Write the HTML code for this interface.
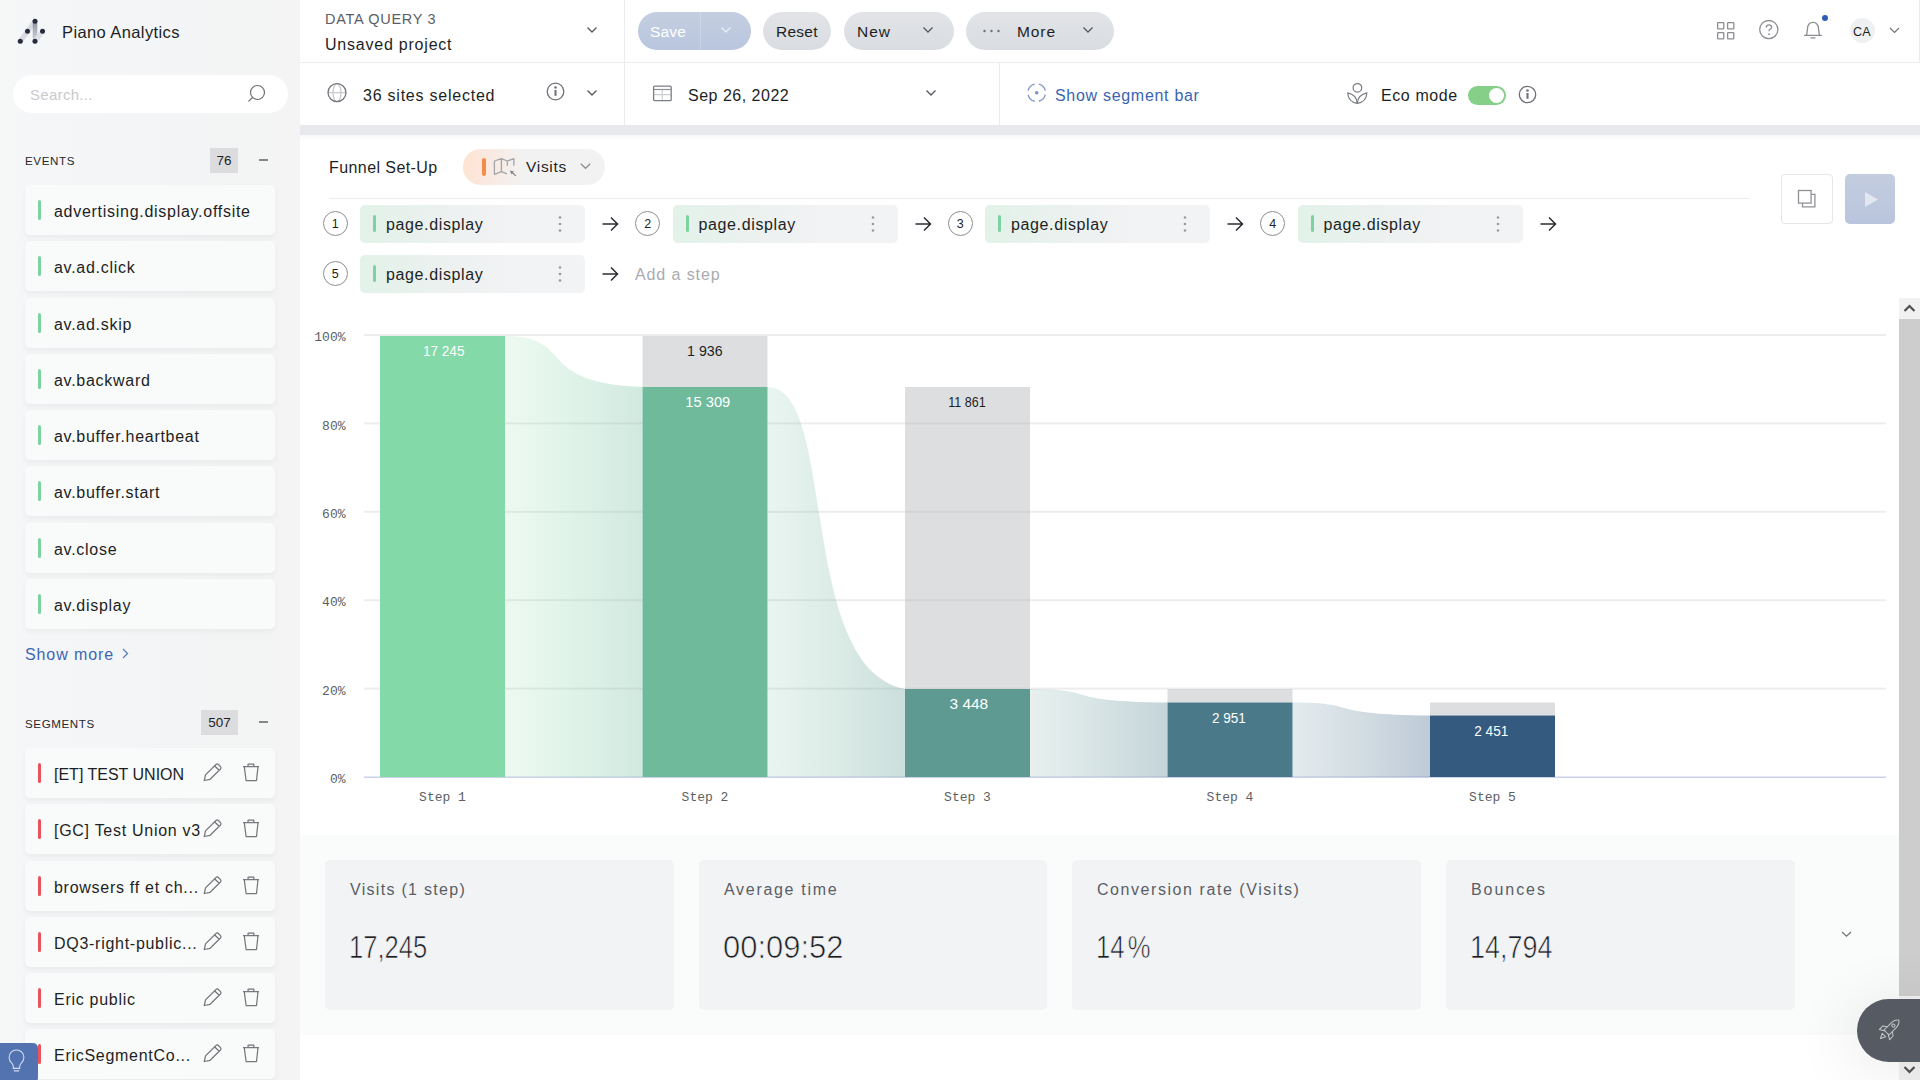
<!DOCTYPE html>
<html><head><meta charset="utf-8">
<style>
*{box-sizing:border-box;margin:0;padding:0}
html,body{width:1920px;height:1080px;overflow:hidden;background:#fff;font-family:"Liberation Sans",sans-serif;color:#1d1f24}
.abs{position:absolute}
#side{position:absolute;left:0;top:0;width:300px;height:1080px;background:linear-gradient(90deg,#f6f7f7 0%,#f5f6f8 12%,#f4f5f7 50%,#f3f4f4 75%,#f3f4f3 100%)}
.t{position:absolute;white-space:nowrap;line-height:1}
.item{position:absolute;left:25px;width:250px;height:50px;background:#f9fafa;border-radius:5px;box-shadow:0 3px 6px rgba(0,0,0,0.045)}
.item .bar{position:absolute;left:13px;top:15px;width:3px;height:20px;border-radius:2px;background:#7dd3a0}
.item .bar.r{background:#e8535d}
.item .lbl{position:absolute;left:29px;top:19px;font-size:16px;letter-spacing:0.72px;line-height:1;white-space:nowrap}
.sech{position:absolute;left:25px;font-size:11.6px;letter-spacing:0.6px;line-height:1;color:#25272b}
.badge{position:absolute;background:#dcdcdf;font-size:13.5px;text-align:center;line-height:25px;height:25px}
.val{font-size:32px;color:#1d1f24;-webkit-text-stroke:0.7px #f2f3f5;transform-origin:0 0}
.minus{position:absolute;left:259px;width:9px;height:1.6px;background:#85878d}
</style></head><body>
<div id="side">
  <svg class="abs" style="left:14px;top:15px" width="36" height="34" viewBox="14 15 36 34">
    <defs><linearGradient id="lg1" gradientUnits="userSpaceOnUse" x1="35" y1="41" x2="35" y2="21"><stop offset="0" stop-color="#d3d5db"/><stop offset="0.6" stop-color="#a9adb8"/><stop offset="1" stop-color="#8a8f9c"/></linearGradient></defs>
    <path d="M20.3 41.3 L35 21.3" stroke="#d9dbe1" stroke-width="5" stroke-linecap="round"/>
    <path d="M35 23 L35 41.3" stroke="url(#lg1)" stroke-width="4.6"/>
    <path d="M35 41.3 L42.5 31.3" stroke="#dfe1e6" stroke-width="5" stroke-linecap="round"/>
    <g fill="#272d3f"><circle cx="35" cy="21.3" r="2.5"/><circle cx="27.5" cy="31.3" r="2.5"/><circle cx="42.5" cy="31.3" r="2.5"/><circle cx="20.3" cy="41.3" r="2.5"/><circle cx="35" cy="41.3" r="2.5"/></g>
  </svg>
  <div class="t" style="left:62px;top:24px;font-size:16.5px;letter-spacing:0.4px;color:#1d1f24">Piano Analytics</div>
  <div class="abs" style="left:13px;top:75px;width:275px;height:38px;border-radius:19px;background:#fff"></div>
  <div class="t" style="left:30px;top:87px;font-size:15px;letter-spacing:0.3px;color:#c9cacc">Search...</div>
  <svg class="abs" style="left:246px;top:83px" width="22" height="22" viewBox="0 0 22 22"><circle cx="11.5" cy="9.5" r="7" fill="none" stroke="#6d6f74" stroke-width="1.2"/><path d="M6.5 14.5 L2.8 18.2" stroke="#6d6f74" stroke-width="1.2" stroke-linecap="round"/></svg>

  <div class="sech" style="top:155px">EVENTS</div>
  <div class="badge" style="left:210px;top:148px;width:28px">76</div>
  <div class="minus" style="top:159px"></div>

  <div class="item" style="top:185px"><div class="bar"></div><div class="lbl">advertising.display.offsite</div></div>
  <div class="item" style="top:241.25px"><div class="bar"></div><div class="lbl">av.ad.click</div></div>
  <div class="item" style="top:297.5px"><div class="bar"></div><div class="lbl">av.ad.skip</div></div>
  <div class="item" style="top:353.75px"><div class="bar"></div><div class="lbl">av.backward</div></div>
  <div class="item" style="top:410px"><div class="bar"></div><div class="lbl">av.buffer.heartbeat</div></div>
  <div class="item" style="top:466.25px"><div class="bar"></div><div class="lbl">av.buffer.start</div></div>
  <div class="item" style="top:522.5px"><div class="bar"></div><div class="lbl">av.close</div></div>
  <div class="item" style="top:578.75px"><div class="bar"></div><div class="lbl">av.display</div></div>

  <div class="t" style="left:25px;top:647px;font-size:16px;letter-spacing:0.9px;color:#3d66b3">Show more</div>
  <svg class="abs" style="left:120px;top:647px" width="10" height="13" viewBox="0 0 10 13"><path d="M3 2 L7.5 6.5 L3 11" fill="none" stroke="#5b7cbf" stroke-width="1.3"/></svg>

  <div class="sech" style="top:718px">SEGMENTS</div>
  <div class="badge" style="left:201px;top:710px;width:37px">507</div>
  <div class="minus" style="top:721px"></div>
  <div class="item" style="top:748px"><div class="bar r"></div><div class="lbl" style="letter-spacing:0">[ET] TEST UNION</div><svg class="abs" style="left:178px;top:14px" width="20" height="20" viewBox="0 0 20 20"><path d="M1.3 18.5 L2.5 12.9 L13 2.5 Q14.2 1.4 15.4 2.5 L17.5 4.6 Q18.6 5.8 17.5 7 L7.1 17.3 Z M12 4.2 L16.2 8.3" fill="none" stroke="#75777d" stroke-width="1.25" stroke-linejoin="round"/></svg><svg class="abs" style="left:217px;top:14px" width="18" height="20" viewBox="0 0 18 20"><path d="M1 4.5 H17 M6.1 4.3 V2.2 H11.8 V4.3 M2.3 4.8 L4.1 18.5 H14.5 L16 4.8" fill="none" stroke="#75777d" stroke-width="1.25" stroke-linejoin="round"/></svg></div>
  <div class="item" style="top:804.25px"><div class="bar r"></div><div class="lbl">[GC] Test Union v3</div><svg class="abs" style="left:178px;top:14px" width="20" height="20" viewBox="0 0 20 20"><path d="M1.3 18.5 L2.5 12.9 L13 2.5 Q14.2 1.4 15.4 2.5 L17.5 4.6 Q18.6 5.8 17.5 7 L7.1 17.3 Z M12 4.2 L16.2 8.3" fill="none" stroke="#75777d" stroke-width="1.25" stroke-linejoin="round"/></svg><svg class="abs" style="left:217px;top:14px" width="18" height="20" viewBox="0 0 18 20"><path d="M1 4.5 H17 M6.1 4.3 V2.2 H11.8 V4.3 M2.3 4.8 L4.1 18.5 H14.5 L16 4.8" fill="none" stroke="#75777d" stroke-width="1.25" stroke-linejoin="round"/></svg></div>
  <div class="item" style="top:860.5px"><div class="bar r"></div><div class="lbl">browsers ff et ch...</div><svg class="abs" style="left:178px;top:14px" width="20" height="20" viewBox="0 0 20 20"><path d="M1.3 18.5 L2.5 12.9 L13 2.5 Q14.2 1.4 15.4 2.5 L17.5 4.6 Q18.6 5.8 17.5 7 L7.1 17.3 Z M12 4.2 L16.2 8.3" fill="none" stroke="#75777d" stroke-width="1.25" stroke-linejoin="round"/></svg><svg class="abs" style="left:217px;top:14px" width="18" height="20" viewBox="0 0 18 20"><path d="M1 4.5 H17 M6.1 4.3 V2.2 H11.8 V4.3 M2.3 4.8 L4.1 18.5 H14.5 L16 4.8" fill="none" stroke="#75777d" stroke-width="1.25" stroke-linejoin="round"/></svg></div>
  <div class="item" style="top:916.75px"><div class="bar r"></div><div class="lbl">DQ3-right-public...</div><svg class="abs" style="left:178px;top:14px" width="20" height="20" viewBox="0 0 20 20"><path d="M1.3 18.5 L2.5 12.9 L13 2.5 Q14.2 1.4 15.4 2.5 L17.5 4.6 Q18.6 5.8 17.5 7 L7.1 17.3 Z M12 4.2 L16.2 8.3" fill="none" stroke="#75777d" stroke-width="1.25" stroke-linejoin="round"/></svg><svg class="abs" style="left:217px;top:14px" width="18" height="20" viewBox="0 0 18 20"><path d="M1 4.5 H17 M6.1 4.3 V2.2 H11.8 V4.3 M2.3 4.8 L4.1 18.5 H14.5 L16 4.8" fill="none" stroke="#75777d" stroke-width="1.25" stroke-linejoin="round"/></svg></div>
  <div class="item" style="top:973px"><div class="bar r"></div><div class="lbl">Eric public</div><svg class="abs" style="left:178px;top:14px" width="20" height="20" viewBox="0 0 20 20"><path d="M1.3 18.5 L2.5 12.9 L13 2.5 Q14.2 1.4 15.4 2.5 L17.5 4.6 Q18.6 5.8 17.5 7 L7.1 17.3 Z M12 4.2 L16.2 8.3" fill="none" stroke="#75777d" stroke-width="1.25" stroke-linejoin="round"/></svg><svg class="abs" style="left:217px;top:14px" width="18" height="20" viewBox="0 0 18 20"><path d="M1 4.5 H17 M6.1 4.3 V2.2 H11.8 V4.3 M2.3 4.8 L4.1 18.5 H14.5 L16 4.8" fill="none" stroke="#75777d" stroke-width="1.25" stroke-linejoin="round"/></svg></div>
  <div class="item" style="top:1029.25px"><div class="bar r"></div><div class="lbl">EricSegmentCo...</div><svg class="abs" style="left:178px;top:14px" width="20" height="20" viewBox="0 0 20 20"><path d="M1.3 18.5 L2.5 12.9 L13 2.5 Q14.2 1.4 15.4 2.5 L17.5 4.6 Q18.6 5.8 17.5 7 L7.1 17.3 Z M12 4.2 L16.2 8.3" fill="none" stroke="#75777d" stroke-width="1.25" stroke-linejoin="round"/></svg><svg class="abs" style="left:217px;top:14px" width="18" height="20" viewBox="0 0 18 20"><path d="M1 4.5 H17 M6.1 4.3 V2.2 H11.8 V4.3 M2.3 4.8 L4.1 18.5 H14.5 L16 4.8" fill="none" stroke="#75777d" stroke-width="1.25" stroke-linejoin="round"/></svg></div>
</div>

<!-- header row 1 -->
<div class="abs" style="left:300px;top:62px;width:1620px;height:1px;background:#ececee"></div>
<div class="abs" style="left:624px;top:0;width:1px;height:62px;background:#ececee"></div>
<div class="abs" style="left:1919px;top:0;width:1px;height:62px;background:#ececee"></div>
<div class="t" style="left:325px;top:12px;font-size:14.5px;letter-spacing:0.7px;color:#5b5e65">DATA QUERY 3</div>
<div class="t" style="left:325px;top:37px;font-size:16px;letter-spacing:0.78px;color:#1d1f24">Unsaved project</div>
<svg class="abs" style="left:586px;top:26px" width="12" height="8" viewBox="0 0 12 8"><path d="M1.5 1.5 L6 6 L10.5 1.5" fill="none" stroke="#55585e" stroke-width="1.3"/></svg>

<div class="abs" style="left:638px;top:12px;width:113px;height:38px;border-radius:19px;background:linear-gradient(180deg,#c4cee0,#b9c6de)"></div>
<div class="abs" style="left:700px;top:12px;width:1px;height:38px;background:rgba(255,255,255,0.22)"></div>
<div class="t" style="left:650px;top:24px;font-size:15.5px;letter-spacing:0.2px;color:#fff">Save</div>
<svg class="abs" style="left:720px;top:26px" width="12" height="8" viewBox="0 0 12 8"><path d="M1.5 1.5 L6 6 L10.5 1.5" fill="none" stroke="#eef1f7" stroke-width="1.2"/></svg>

<div class="abs" style="left:763px;top:12px;width:68px;height:38px;border-radius:19px;background:linear-gradient(180deg,#e2e4e7,#d9dce1)"></div>
<div class="t" style="left:776px;top:24px;font-size:15.5px;letter-spacing:0.25px">Reset</div>

<div class="abs" style="left:844px;top:12px;width:110px;height:38px;border-radius:19px;background:linear-gradient(180deg,#e2e4e7,#d9dce1)"></div>
<div class="t" style="left:857px;top:24px;font-size:15.5px;letter-spacing:1px">New</div>
<svg class="abs" style="left:922px;top:26px" width="12" height="8" viewBox="0 0 12 8"><path d="M1.5 1.5 L6 6 L10.5 1.5" fill="none" stroke="#55585e" stroke-width="1.3"/></svg>

<div class="abs" style="left:966px;top:12px;width:148px;height:38px;border-radius:19px;background:linear-gradient(180deg,#e2e4e7,#d9dce1)"></div>
<svg class="abs" style="left:982px;top:28px" width="20" height="6" viewBox="0 0 20 6"><g fill="#6c6f75"><circle cx="2.5" cy="3" r="1.2"/><circle cx="9.5" cy="3" r="1.2"/><circle cx="16.5" cy="3" r="1.2"/></g></svg>
<div class="t" style="left:1017px;top:24px;font-size:15.5px;letter-spacing:0.9px">More</div>
<svg class="abs" style="left:1082px;top:26px" width="12" height="8" viewBox="0 0 12 8"><path d="M1.5 1.5 L6 6 L10.5 1.5" fill="none" stroke="#55585e" stroke-width="1.3"/></svg>

<svg class="abs" style="left:1714px;top:19px" width="24" height="24" viewBox="0 0 24 24"><g fill="none" stroke="#8b8d92" stroke-width="1.3"><rect x="3.6" y="3.6" width="6.2" height="6.2" rx="0.6"/><rect x="13.6" y="3.6" width="6.2" height="6.2" rx="0.6"/><rect x="3.6" y="13.6" width="6.2" height="6.2" rx="0.6"/><rect x="13.6" y="13.6" width="6.2" height="6.2" rx="0.6"/></g></svg>
<svg class="abs" style="left:1757px;top:18px" width="24" height="24" viewBox="0 0 24 24"><circle cx="11.8" cy="11.6" r="9.1" fill="none" stroke="#8b8d92" stroke-width="1.3"/><path d="M9.3 9.4 Q9.3 6.8 12 6.8 Q14.6 6.8 14.6 9.2 Q14.6 10.8 12.6 11.6 Q12 11.9 12 13.2" fill="none" stroke="#8b8d92" stroke-width="1.3"/><circle cx="12" cy="16.2" r="0.9" fill="#8b8d92"/></svg>
<svg class="abs" style="left:1800px;top:18px" width="26" height="24" viewBox="0 0 26 24"><path d="M4.6 17.4 H21.4 M6.6 17.2 Q7.2 14.2 7.5 10.4 Q8 4.3 13 4.3 Q18 4.3 18.5 10.4 Q18.8 14.2 19.4 17.2 M11 19.9 H15" fill="none" stroke="#8b8d92" stroke-width="1.3" stroke-linecap="round"/></svg>
<div class="abs" style="left:1822px;top:15px;width:6px;height:6px;border-radius:50%;background:#2e5cb8"></div>
<div class="abs" style="left:1850px;top:18px;width:25px;height:25px;border-radius:50%;background:#eff0f2"></div>
<div class="t" style="left:1853px;top:26px;font-size:12.5px;letter-spacing:0.2px;color:#1d1f24">CA</div>
<svg class="abs" style="left:1888px;top:26px" width="13" height="9" viewBox="0 0 13 9"><path d="M2 2 L6.5 6.4 L11 2" fill="none" stroke="#6f7177" stroke-width="1.2"/></svg>

<!-- header row 2 -->
<div class="abs" style="left:624px;top:63px;width:1px;height:62px;background:#ececee"></div>
<div class="abs" style="left:999px;top:63px;width:1px;height:62px;background:#ececee"></div>
<svg class="abs" style="left:325px;top:81px" width="24" height="24" viewBox="0 0 24 24"><ellipse cx="12" cy="11.6" rx="4" ry="9" fill="none" stroke="#c2c4c8" stroke-width="1.2"/><path d="M3 11.6 H21" stroke="#c8cacd" stroke-width="1.3"/><circle cx="12" cy="11.6" r="9" fill="none" stroke="#72757b" stroke-width="1.3"/></svg>
<div class="t" style="left:363px;top:88px;font-size:16px;letter-spacing:0.77px">36 sites selected</div>
<svg class="abs" style="left:544px;top:80px" width="22" height="22" viewBox="0 0 22 22"><circle cx="11.5" cy="11.5" r="8.3" fill="none" stroke="#6f7177" stroke-width="1.3"/><circle cx="11.5" cy="7.5" r="1.3" fill="#6f7177"/><path d="M11.5 10 V15.8" stroke="#6f7177" stroke-width="2.1"/></svg>
<svg class="abs" style="left:586px;top:89px" width="12" height="8" viewBox="0 0 12 8"><path d="M1.5 1.5 L6 6 L10.5 1.5" fill="none" stroke="#55585e" stroke-width="1.3"/></svg>

<svg class="abs" style="left:650px;top:82px" width="24" height="22" viewBox="0 0 24 22"><path d="M3.6 12.7 H21 M12.3 7.6 V18.6" stroke="#cdd0d3" stroke-width="1.2"/><path d="M3.6 7.5 H21" stroke="#8e9196" stroke-width="1.2"/><rect x="3.6" y="4.1" width="17.6" height="14.6" rx="1.2" fill="none" stroke="#7b7e84" stroke-width="1.3"/></svg>
<div class="t" style="left:688px;top:88px;font-size:16px;letter-spacing:0.5px">Sep 26, 2022</div>
<svg class="abs" style="left:925px;top:89px" width="12" height="8" viewBox="0 0 12 8"><path d="M1.5 1.5 L6 6 L10.5 1.5" fill="none" stroke="#55585e" stroke-width="1.3"/></svg>

<svg class="abs" style="left:1025px;top:81px" width="24" height="24" viewBox="0 0 24 24"><circle cx="11.7" cy="11.7" r="8.8" fill="none" stroke="#7f97c6" stroke-width="1.4" stroke-dasharray="9.5 4.3" stroke-dashoffset="-2"/><circle cx="11.7" cy="11.7" r="1.8" fill="#7b93c4"/></svg>
<div class="t" style="left:1055px;top:88px;font-size:16px;letter-spacing:0.7px;color:#3a64b0">Show segment bar</div>

<svg class="abs" style="left:1345px;top:81px" width="24" height="24" viewBox="0 0 24 24"><g fill="none" stroke="#7a7d83" stroke-width="1.25" stroke-linejoin="round"><circle cx="12.4" cy="6.8" r="4.3"/><path d="M12.3 22.3 Q3.2 21.2 2.7 11.8 Q11.6 13.6 12.3 22.3 Z"/><path d="M12.3 22.3 Q21.4 21.2 21.9 11.8 Q13 13.6 12.3 22.3 Z"/></g></svg>
<div class="t" style="left:1381px;top:88px;font-size:16px;letter-spacing:0.6px">Eco mode</div>
<div class="abs" style="left:1468px;top:86px;width:38px;height:19px;border-radius:10px;background:#86cf88"></div>
<div class="abs" style="left:1488.5px;top:88px;width:15px;height:15px;border-radius:50%;background:#fff"></div>
<svg class="abs" style="left:1517px;top:84px" width="22" height="22" viewBox="0 0 22 22"><circle cx="10.5" cy="10.5" r="8.2" fill="none" stroke="#6f7177" stroke-width="1.3"/><circle cx="10.5" cy="6.5" r="1.3" fill="#6f7177"/><path d="M10.5 9 V14.8" stroke="#6f7177" stroke-width="2.1"/></svg>

<!-- gray band -->
<div class="abs" style="left:300px;top:125px;width:1620px;height:10px;background:#e8e9ec"></div>
<div class="abs" style="left:300px;top:135px;width:1620px;height:6px;background:linear-gradient(180deg,#f7f8f9,#fff)"></div>

<div class="t" style="left:329px;top:160px;font-size:16px;letter-spacing:0.42px">Funnel Set-Up</div>
<div class="abs" style="left:463px;top:148.5px;width:142px;height:36px;border-radius:18px;background:linear-gradient(90deg,#fee3d2 0%,#f8ebe4 22%,#f2f2f2 42%,#f2f2f2 100%)"></div>
<div class="abs" style="left:482px;top:158px;width:4px;height:17.5px;border-radius:2px;background:#f58a4b"></div>
<svg class="abs" style="left:492px;top:156px" width="26" height="22" viewBox="0 0 26 22"><path d="M2.4 5 L9.4 2.7 L15.3 5 L21.9 2.7 V9.7 M15.3 5 V9.7 M9.4 2.7 V15.6 M2.4 5 V18.3 L9.4 15.6 L14.9 17.9" fill="none" stroke="#a3a5a9" stroke-width="1.3" stroke-linejoin="round"/><path d="M19.5 16 L23.9 19.9" stroke="#808287" stroke-width="1.2"/><path d="M18 14.4 L22 15.6 L19.2 18.3 Z" fill="#808287"/></svg>
<div class="t" style="left:526px;top:159px;font-size:15.5px;letter-spacing:0.7px">Visits</div>
<svg class="abs" style="left:579px;top:162px" width="13" height="9" viewBox="0 0 13 9"><path d="M1.8 1.8 L6.5 6.3 L11.2 1.8" fill="none" stroke="#8b8d92" stroke-width="1.2"/></svg>
<div class="abs" style="left:329px;top:198px;width:1421px;height:1px;background:#ececee"></div>

<div class="abs" style="left:1781px;top:174px;width:52px;height:50px;border-radius:4px;border:1px solid #e5e6e8;background:#fff"></div>
<svg class="abs" style="left:1795px;top:187px" width="24" height="24" viewBox="0 0 24 24"><path d="M7.5 16.3 V19.8 H19.9 V7.4 H16.3" fill="none" stroke="#8f9195" stroke-width="1.3"/><rect x="3.5" y="3.5" width="12.6" height="12.6" fill="none" stroke="#8f9195" stroke-width="1.3"/></svg>
<div class="abs" style="left:1845px;top:174px;width:50px;height:50px;border-radius:5px;background:linear-gradient(180deg,#c4cde0,#b9c5dd)"></div>
<svg class="abs" style="left:1860px;top:188px" width="22" height="22" viewBox="0 0 22 22"><path d="M5 4 L18 11.5 L5 19 Z" fill="#e3e7f0"/></svg>
<div class="abs" style="left:322.8px;top:211.0px;width:25px;height:25px;border-radius:50%;border:1px solid #8d8f94;background:#fff"></div>
<div class="t" style="left:322.8px;top:217.5px;width:25px;text-align:center;font-size:12.5px">1</div>
<div class="abs" style="left:360px;top:205px;width:225px;height:37.5px;border-radius:5px;background:linear-gradient(90deg,#e2f2e9 0%,#eef1f1 45%,#f2f3f4 70%)"></div>
<div class="abs" style="left:373px;top:215.0px;width:3px;height:17px;border-radius:1.5px;background:#7dd3a0"></div>
<div class="t" style="left:386px;top:217px;font-size:16px;letter-spacing:0.63px">page.display</div>
<svg class="abs" style="left:556px;top:214.5px" width="8" height="18" viewBox="0 0 8 18"><g fill="#9a9ca1"><circle cx="4" cy="2.5" r="1.3"/><circle cx="4" cy="9" r="1.3"/><circle cx="4" cy="15.5" r="1.3"/></g></svg>
<svg class="abs" style="left:600px;top:214.5px" width="20" height="18" viewBox="0 0 20 18"><path d="M2.5 9 H17.5 M11 2.5 L17.5 9 L11 15.5" fill="none" stroke="#2a2d33" stroke-width="1.5"/></svg>
<div class="abs" style="left:635.3px;top:211.0px;width:25px;height:25px;border-radius:50%;border:1px solid #8d8f94;background:#fff"></div>
<div class="t" style="left:635.3px;top:217.5px;width:25px;text-align:center;font-size:12.5px">2</div>
<div class="abs" style="left:672.5px;top:205px;width:225px;height:37.5px;border-radius:5px;background:linear-gradient(90deg,#e2f2e9 0%,#eef1f1 45%,#f2f3f4 70%)"></div>
<div class="abs" style="left:685.5px;top:215.0px;width:3px;height:17px;border-radius:1.5px;background:#7dd3a0"></div>
<div class="t" style="left:698.5px;top:217px;font-size:16px;letter-spacing:0.63px">page.display</div>
<svg class="abs" style="left:868.5px;top:214.5px" width="8" height="18" viewBox="0 0 8 18"><g fill="#9a9ca1"><circle cx="4" cy="2.5" r="1.3"/><circle cx="4" cy="9" r="1.3"/><circle cx="4" cy="15.5" r="1.3"/></g></svg>
<svg class="abs" style="left:912.5px;top:214.5px" width="20" height="18" viewBox="0 0 20 18"><path d="M2.5 9 H17.5 M11 2.5 L17.5 9 L11 15.5" fill="none" stroke="#2a2d33" stroke-width="1.5"/></svg>
<div class="abs" style="left:947.8px;top:211.0px;width:25px;height:25px;border-radius:50%;border:1px solid #8d8f94;background:#fff"></div>
<div class="t" style="left:947.8px;top:217.5px;width:25px;text-align:center;font-size:12.5px">3</div>
<div class="abs" style="left:985px;top:205px;width:225px;height:37.5px;border-radius:5px;background:linear-gradient(90deg,#e2f2e9 0%,#eef1f1 45%,#f2f3f4 70%)"></div>
<div class="abs" style="left:998px;top:215.0px;width:3px;height:17px;border-radius:1.5px;background:#7dd3a0"></div>
<div class="t" style="left:1011px;top:217px;font-size:16px;letter-spacing:0.63px">page.display</div>
<svg class="abs" style="left:1181px;top:214.5px" width="8" height="18" viewBox="0 0 8 18"><g fill="#9a9ca1"><circle cx="4" cy="2.5" r="1.3"/><circle cx="4" cy="9" r="1.3"/><circle cx="4" cy="15.5" r="1.3"/></g></svg>
<svg class="abs" style="left:1225px;top:214.5px" width="20" height="18" viewBox="0 0 20 18"><path d="M2.5 9 H17.5 M11 2.5 L17.5 9 L11 15.5" fill="none" stroke="#2a2d33" stroke-width="1.5"/></svg>
<div class="abs" style="left:1260.3px;top:211.0px;width:25px;height:25px;border-radius:50%;border:1px solid #8d8f94;background:#fff"></div>
<div class="t" style="left:1260.3px;top:217.5px;width:25px;text-align:center;font-size:12.5px">4</div>
<div class="abs" style="left:1297.5px;top:205px;width:225px;height:37.5px;border-radius:5px;background:linear-gradient(90deg,#e2f2e9 0%,#eef1f1 45%,#f2f3f4 70%)"></div>
<div class="abs" style="left:1310.5px;top:215.0px;width:3px;height:17px;border-radius:1.5px;background:#7dd3a0"></div>
<div class="t" style="left:1323.5px;top:217px;font-size:16px;letter-spacing:0.63px">page.display</div>
<svg class="abs" style="left:1493.5px;top:214.5px" width="8" height="18" viewBox="0 0 8 18"><g fill="#9a9ca1"><circle cx="4" cy="2.5" r="1.3"/><circle cx="4" cy="9" r="1.3"/><circle cx="4" cy="15.5" r="1.3"/></g></svg>
<svg class="abs" style="left:1537.5px;top:214.5px" width="20" height="18" viewBox="0 0 20 18"><path d="M2.5 9 H17.5 M11 2.5 L17.5 9 L11 15.5" fill="none" stroke="#2a2d33" stroke-width="1.5"/></svg>
<div class="abs" style="left:322.8px;top:261.0px;width:25px;height:25px;border-radius:50%;border:1px solid #8d8f94;background:#fff"></div>
<div class="t" style="left:322.8px;top:267.5px;width:25px;text-align:center;font-size:12.5px">5</div>
<div class="abs" style="left:360px;top:255px;width:225px;height:37.5px;border-radius:5px;background:linear-gradient(90deg,#e2f2e9 0%,#eef1f1 45%,#f2f3f4 70%)"></div>
<div class="abs" style="left:373px;top:265.0px;width:3px;height:17px;border-radius:1.5px;background:#7dd3a0"></div>
<div class="t" style="left:386px;top:267px;font-size:16px;letter-spacing:0.63px">page.display</div>
<svg class="abs" style="left:556px;top:264.5px" width="8" height="18" viewBox="0 0 8 18"><g fill="#9a9ca1"><circle cx="4" cy="2.5" r="1.3"/><circle cx="4" cy="9" r="1.3"/><circle cx="4" cy="15.5" r="1.3"/></g></svg>
<svg class="abs" style="left:600px;top:264.5px" width="20" height="18" viewBox="0 0 20 18"><path d="M2.5 9 H17.5 M11 2.5 L17.5 9 L11 15.5" fill="none" stroke="#2a2d33" stroke-width="1.5"/></svg>
<div class="t" style="left:635px;top:267px;font-size:16px;letter-spacing:0.9px;color:#a9abb0">Add a step</div>
<svg class="abs" style="left:0;top:0" width="1920" height="840" viewBox="0 0 1920 840">
<defs>
<linearGradient id="fl0" x1="0" y1="0" x2="1" y2="0"><stop offset="0" stop-color="#83d9a7" stop-opacity="0.15"/><stop offset="1" stop-color="#6fba9b" stop-opacity="0.32"/></linearGradient>
<linearGradient id="fl1" x1="0" y1="0" x2="1" y2="0"><stop offset="0" stop-color="#6fba9b" stop-opacity="0.15"/><stop offset="1" stop-color="#5e9a91" stop-opacity="0.32"/></linearGradient>
<linearGradient id="fl2" x1="0" y1="0" x2="1" y2="0"><stop offset="0" stop-color="#5e9a91" stop-opacity="0.15"/><stop offset="1" stop-color="#4a7a89" stop-opacity="0.32"/></linearGradient>
<linearGradient id="fl3" x1="0" y1="0" x2="1" y2="0"><stop offset="0" stop-color="#4a7a89" stop-opacity="0.15"/><stop offset="1" stop-color="#345a80" stop-opacity="0.32"/></linearGradient>
</defs>
<rect x="364" y="334" width="1522" height="2" fill="#ededed"/>
<rect x="364" y="422.4" width="1522" height="2" fill="#ededed"/>
<rect x="364" y="510.8" width="1522" height="2" fill="#ededed"/>
<rect x="364" y="599.2" width="1522" height="2" fill="#ededed"/>
<rect x="364" y="687.6" width="1522" height="2" fill="#ededed"/>
<rect x="364" y="776.5" width="1522" height="1.5" fill="#ccd2ea"/>
<text x="345.5" y="341.2" text-anchor="end" font-family="Liberation Mono" font-size="13" fill="#5d5f63">100%</text>
<text x="345.5" y="429.59999999999997" text-anchor="end" font-family="Liberation Mono" font-size="13" fill="#5d5f63">80%</text>
<text x="345.5" y="518.0" text-anchor="end" font-family="Liberation Mono" font-size="13" fill="#5d5f63">60%</text>
<text x="345.5" y="606.4000000000001" text-anchor="end" font-family="Liberation Mono" font-size="13" fill="#5d5f63">40%</text>
<text x="345.5" y="694.8000000000001" text-anchor="end" font-family="Liberation Mono" font-size="13" fill="#5d5f63">20%</text>
<text x="345.5" y="783.2" text-anchor="end" font-family="Liberation Mono" font-size="13" fill="#5d5f63">0%</text>
<path d="M505 336 C575.8 336.0 533.2 383.4 642.5 387 L642.5 777 L505 777 Z" fill="url(#fl0)"/>
<path d="M767.5 387 C838.3 387.0 795.7 667.9 905 689 L905 777 L767.5 777 Z" fill="url(#fl1)"/>
<path d="M1030 689 C1100.8 689.0 1058.2 701.6 1167.5 702.5 L1167.5 777 L1030 777 Z" fill="url(#fl2)"/>
<path d="M1292.5 702.5 C1363.3 702.5 1320.7 714.6 1430 715.5 L1430 777 L1292.5 777 Z" fill="url(#fl3)"/>
<rect x="380" y="336" width="125" height="441" fill="#83d9a7"/>
<text x="442.5" y="801" text-anchor="middle" font-family="Liberation Mono" font-size="13" fill="#5d5f63">Step 1</text>
<rect x="642.5" y="336" width="125" height="51" fill="#b4b6bb" fill-opacity="0.45"/>
<rect x="642.5" y="387" width="125" height="390" fill="#6fba9b"/>
<text x="705.0" y="801" text-anchor="middle" font-family="Liberation Mono" font-size="13" fill="#5d5f63">Step 2</text>
<rect x="905" y="387" width="125" height="302" fill="#b4b6bb" fill-opacity="0.45"/>
<rect x="905" y="689" width="125" height="88" fill="#5e9a91"/>
<text x="967.5" y="801" text-anchor="middle" font-family="Liberation Mono" font-size="13" fill="#5d5f63">Step 3</text>
<rect x="1167.5" y="689" width="125" height="13.5" fill="#b4b6bb" fill-opacity="0.45"/>
<rect x="1167.5" y="702.5" width="125" height="74.5" fill="#4a7a89"/>
<text x="1230.0" y="801" text-anchor="middle" font-family="Liberation Mono" font-size="13" fill="#5d5f63">Step 4</text>
<rect x="1430" y="702.5" width="125" height="13.0" fill="#b4b6bb" fill-opacity="0.45"/>
<rect x="1430" y="715.5" width="125" height="61.5" fill="#345a80"/>
<text x="1492.5" y="801" text-anchor="middle" font-family="Liberation Mono" font-size="13" fill="#5d5f63">Step 5</text>
<text x="422.9" y="356" font-family="Liberation Sans" font-size="14.5" fill="#fff" textLength="41.6" lengthAdjust="spacingAndGlyphs">17 245</text>
<text x="687.1" y="356" font-family="Liberation Sans" font-size="14.5" fill="#1d1f24" textLength="35.6" lengthAdjust="spacingAndGlyphs">1 936</text>
<text x="685.3" y="407" font-family="Liberation Sans" font-size="14.5" fill="#fff" textLength="45.0" lengthAdjust="spacingAndGlyphs">15 309</text>
<text x="948.3" y="407" font-family="Liberation Sans" font-size="14.5" fill="#1d1f24" textLength="37.4" lengthAdjust="spacingAndGlyphs">11 861</text>
<text x="949.5" y="709" font-family="Liberation Sans" font-size="14.5" fill="#fff" textLength="38.7" lengthAdjust="spacingAndGlyphs">3 448</text>
<text x="1211.9" y="723" font-family="Liberation Sans" font-size="14.5" fill="#fff" textLength="33.9" lengthAdjust="spacingAndGlyphs">2 951</text>
<text x="1474.2" y="736" font-family="Liberation Sans" font-size="14.5" fill="#fff" textLength="34.1" lengthAdjust="spacingAndGlyphs">2 451</text>
</svg>

<div class="abs" style="left:300px;top:835px;width:1599px;height:200px;background:#fafbfb"></div>
<div class="abs" style="left:325px;top:860px;width:348.6px;height:150px;border-radius:5px;background:#f2f3f5"></div>
<div class="t" style="left:350px;top:882px;font-size:16px;letter-spacing:1.3px;color:#5a5e66">Visits (1 step)</div>
<div class="t val" data-w="76" style="left:349px;top:931px;transform:scaleX(0.8)">17,245</div>
<div class="abs" style="left:698.7px;top:860px;width:348.6px;height:150px;border-radius:5px;background:#f2f3f5"></div>
<div class="t" style="left:724px;top:882px;font-size:16px;letter-spacing:1.7px;color:#5a5e66">Average time</div>
<div class="t val" data-w="118" style="left:723px;top:931px;transform:scaleX(0.967)">00:09:52</div>
<div class="abs" style="left:1072.3px;top:860px;width:348.6px;height:150px;border-radius:5px;background:#f2f3f5"></div>
<div class="t" style="left:1097px;top:882px;font-size:16px;letter-spacing:1.56px;color:#5a5e66">Conversion rate (Visits)</div>
<div class="t val" data-w="52" style="left:1096px;top:931px;transform:scaleX(0.80)">14<span style="margin-left:4px">%</span></div>
<div class="abs" style="left:1446px;top:860px;width:348.6px;height:150px;border-radius:5px;background:#f2f3f5"></div>
<div class="t" style="left:1471px;top:882px;font-size:16px;letter-spacing:1.95px;color:#5a5e66">Bounces</div>
<div class="t val" data-w="80" style="left:1470px;top:931px;transform:scaleX(0.842)">14,794</div>
<svg class="abs" style="left:1840px;top:930px" width="13" height="9" viewBox="0 0 13 9"><path d="M2 2 L6.5 6.2 L11 2" fill="none" stroke="#6f7177" stroke-width="1.2"/></svg>
<!-- scrollbar -->
<div class="abs" style="left:1899px;top:298px;width:21px;height:782px;background:#f1f1f1"></div>
<div class="abs" style="left:1899px;top:319px;width:21px;height:677px;background:#cdcdcd"></div>
<svg class="abs" style="left:1899px;top:298px" width="21" height="21" viewBox="0 0 21 21"><path d="M5.5 13 L10.5 8 L15.5 13" fill="none" stroke="#505050" stroke-width="2.2"/></svg>
<svg class="abs" style="left:1899px;top:1061px" width="21" height="19" viewBox="0 0 21 19"><path d="M5.5 6 L10.5 11 L15.5 6" fill="none" stroke="#505050" stroke-width="2.2"/></svg>
<!-- rocket -->
<div class="abs" style="left:1857px;top:999px;width:110px;height:63px;border-radius:31.5px;background:#555a63;box-shadow:-6px 6px 60px 6px rgba(0,0,0,0.07)"></div>
<svg class="abs" style="left:1877px;top:1019px" width="24" height="24" viewBox="0 0 24 24"><g fill="none" stroke="#c3c5c9" stroke-width="1.05" stroke-linejoin="round"><path d="M7 11 L14.8 3.3 Q18.6 0.2 21.8 1.2 Q22.8 4.4 19.7 8.2 L12 16 Z"/><circle cx="16.4" cy="6.6" r="1.6"/><path d="M10.3 7.7 L6 6.9 L2.4 10.4 L8.3 12"/><path d="M15.3 12.7 L16.1 17 L12.6 20.6 L11 14.7"/><path d="M5.2 14.3 L3.4 19.6 L8.7 17.8 Z"/></g></svg>
<!-- bulb -->
<div class="abs" style="left:0;top:1043px;width:38px;height:40px;border-radius:0 5px 5px 0;background:#5373b0"></div>
<svg class="abs" style="left:3px;top:1047px" width="28" height="28" viewBox="0 0 28 28"><path d="M10.3 21.4 V19.3 Q10.3 17.5 8.5 15.8 A7.4 7.4 0 1 1 18.5 15.8 Q16.7 17.5 16.7 19.3 V21.4 Z M11.3 23.9 H15.7" fill="none" stroke="#d4dcee" stroke-width="1.1" stroke-linejoin="round" stroke-linecap="round"/></svg>


</body></html>
